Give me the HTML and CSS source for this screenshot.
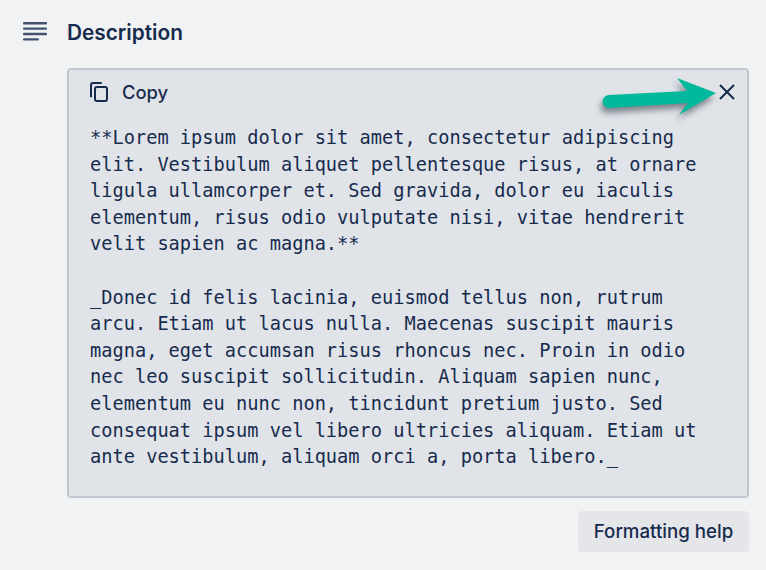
FILE: index.html
```html
<!DOCTYPE html>
<html lang="en">
<head>
    <title>Description</title>
    <meta charset="utf-8">
    <link rel="stylesheet" href="styles.css">
</head>
<body>
<div class="section">
    <div class="section-heading">
        <svg class="desc-icon" width="24" height="20" viewBox="0 0 24 20">
            <rect x="0" y="0" width="24" height="2.4" rx="1"></rect>
            <rect x="0" y="5.4" width="24" height="2.4" rx="1"></rect>
            <rect x="0" y="10.8" width="24" height="2.4" rx="1"></rect>
            <rect x="0" y="16.2" width="16" height="2.4" rx="1"></rect>
        </svg>
        <h2>Description</h2>
    </div>
    <div class="panel">
        <div class="panel-top">
            <svg class="copy-icon" width="18" height="20" viewBox="0 0 18 20">
                <path d="M1 14.5V3a2 2 0 0 1 2-2h8" fill="none" stroke="#172b4d" stroke-width="2" stroke-linecap="round"></path>
                <rect x="5" y="5" width="12" height="14" rx="2" fill="none" stroke="#172b4d" stroke-width="2"></rect>
            </svg>
            <span class="copy-label">Copy</span>
            <svg class="close-icon" width="16" height="16" viewBox="0 0 16 16">
                <path d="M1 1L15 15M15 1L1 15" fill="none" stroke="#172b4d" stroke-width="2"></path>
            </svg>
        </div>
        <pre class="markdown">**Lorem ipsum dolor sit amet, consectetur adipiscing
elit. Vestibulum aliquet pellentesque risus, at ornare
ligula ullamcorper et. Sed gravida, dolor eu iaculis
elementum, risus odio vulputate nisi, vitae hendrerit
velit sapien ac magna.**

_Donec id felis lacinia, euismod tellus non, rutrum
arcu. Etiam ut lacus nulla. Maecenas suscipit mauris
magna, eget accumsan risus rhoncus nec. Proin in odio
nec leo suscipit sollicitudin. Aliquam sapien nunc,
elementum eu nunc non, tincidunt pretium justo. Sed
consequat ipsum vel libero ultricies aliquam. Etiam ut
ante vestibulum, aliquam orci a, porta libero._</pre>
    </div>
    <div class="panel-footer">
        <button class="btn" type="button">Formatting help</button>
    </div>
</div>
<svg class="arrow" width="134" height="52" viewBox="0 0 134 52">
    <path d="M13 21L91 17L81 4L120 19L83 41L92 29L13 34A6.5 6.5 0 0 1 13 21Z" fill="#00b89c"></path>
</svg>
</body>
</html>
```

FILE: styles.css
```css
body {
    margin: 0;
    background-color: #f1f2f4;
    color: #172b4d;
    font-family: "Inter", "Liberation Sans", sans-serif;
    height: 570px;
    overflow: hidden;
    position: relative;
}

.section {
    padding: 20px 17px 0 23px;
}

.section-heading {
    display: flex;
    align-items: center;
    height: 24px;
}

.desc-icon {
    fill: #42526e;
    margin-right: 20px;
    margin-top: -1px;
}

.section-heading h2 {
    margin: 0;
    font-size: 20.8px;
    font-weight: 600;
}

.panel {
    margin-top: 24px;
    margin-left: 44px;
    height: 430px;
    box-sizing: border-box;
    background-color: #e0e4e9;
    border: solid #c1c7d0 2px;
    border-radius: 4px;
    padding: 0 21px;
}

.panel-top {
    display: flex;
    align-items: center;
    height: 44px;
}

.copy-label {
    margin-left: 14px;
    font-size: 18.4px;
    font-weight: 500;
}

.close-icon {
    margin-left: auto;
    margin-right: -9px;
}

.markdown {
    margin: 0;
    padding-top: 11px;
    font-family: "DejaVu Sans Mono", monospace;
    font-size: 18.67px;
    line-height: 26.6px;
    color: #172b4d;
}

.panel-footer {
    display: flex;
    justify-content: flex-end;
    margin-top: 13px;
}

.btn {
    height: 41px;
    width: 171px;
    border: none;
    border-radius: 4px;
    background-color: #e4e6ea;
    color: #172b4d;
    font-family: "Inter", "Liberation Sans", sans-serif;
    font-size: 18.7px;
    font-weight: 500;
}

.arrow {
    position: absolute;
    left: 596px;
    top: 74px;
    filter: drop-shadow(-2px 5px 3px rgba(40, 50, 60, 0.55));
}
```
